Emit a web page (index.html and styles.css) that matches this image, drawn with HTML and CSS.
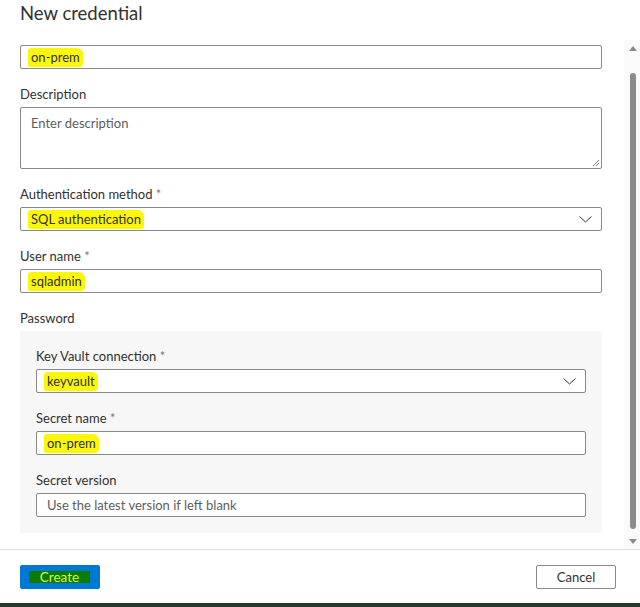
FILE: index.html
```html
<!DOCTYPE html>
<html lang="en">
<head>
<meta charset="utf-8">
<title>New credential</title>
<link rel="stylesheet" href="styles.css">
</head>
<body>
<div class="dialog">
  <header class="header">
    <h1 class="title">New credential</h1>
  </header>
  <div class="scroll">
    <div class="content">
      <div class="field">
        <div class="input"><span class="hl">on-prem</span></div>
      </div>
      <div class="field">
        <div class="label">Description</div>
        <div class="input textarea">
          <span class="placeholder">Enter description</span>
          <svg class="grip" width="8" height="8" viewBox="0 0 8 8"><path d="M7 1 L1 7 M7 4 L4 7" stroke="#777" stroke-width="1" fill="none"/></svg>
        </div>
      </div>
      <div class="field">
        <div class="label">Authentication method <span class="req">*</span></div>
        <div class="input select"><span class="hl">SQL authentication</span>
          <svg class="chev" width="13" height="7" viewBox="0 0 13 7"><path d="M0.5 0.5 L6.5 6 L12.5 0.5" stroke="#323130" stroke-width="1" fill="none"/></svg>
        </div>
      </div>
      <div class="field">
        <div class="label">User name <span class="req">*</span></div>
        <div class="input"><span class="hl">sqladmin</span></div>
      </div>
      <div class="field tight">
        <div class="label">Password</div>
        <div class="panel">
          <div class="field">
            <div class="label">Key Vault connection <span class="req">*</span></div>
            <div class="input select"><span class="hl">keyvault</span>
              <svg class="chev" width="13" height="7" viewBox="0 0 13 7"><path d="M0.5 0.5 L6.5 6 L12.5 0.5" stroke="#323130" stroke-width="1" fill="none"/></svg>
            </div>
          </div>
          <div class="field">
            <div class="label">Secret name <span class="req">*</span></div>
            <div class="input"><span class="hl">on-prem</span></div>
          </div>
          <div class="field last">
            <div class="label">Secret version</div>
            <div class="input"><span class="placeholder">Use the latest version if left blank</span></div>
          </div>
        </div>
      </div>
    </div>
    <div class="scrollbar">
      <div class="sb-btn"><span class="arrow up"></span></div>
      <div class="sb-track"><div class="thumb"></div></div>
      <div class="sb-btn"><span class="arrow down"></span></div>
    </div>
  </div>
  <footer class="footer">
    <button class="btn primary"><span class="hl-green">Create</span></button>
    <button class="btn">Cancel</button>
  </footer>
  <div class="bottom-bar"></div>
</div>
</body>
</html>
```

FILE: styles.css
```css
* { box-sizing: border-box; }
html, body { margin: 0; padding: 0; background: #fff; }
body {
  font-family: Lato, "Open Sans", sans-serif;
  color: #323130;
  font-size: 13px;
  width: 640px;
  height: 607px;
  overflow: hidden;
}
.dialog { display: flex; flex-direction: column; height: 607px; }
.header { height: 40px; padding-left: 20px; }
.title {
  margin: 0;
  font-size: 18.5px;
  font-weight: 400;
  line-height: 26px;
  color: #323130;
}
.scroll { display: flex; height: 509px; }
.content { flex: 1; padding: 5px 22px 0 20px; }
.field { margin-bottom: 15px; }
.field.tight { margin-bottom: 0; }
.field.last { margin-bottom: 0; }
.label {
  line-height: 20px;
  height: 20px;
  margin-bottom: 3px;
  font-size: 13px;
  color: #323130;
}
.req { color: #797775; }
.input {
  position: relative;
  height: 24px;
  border: 1px solid #8a8886;
  border-radius: 2px;
  background: #fff;
  padding: 0 10px;
  display: flex;
  align-items: center;
  font-size: 13px;
}
.textarea { height: 62px; align-items: flex-start; padding-top: 7px; }
.placeholder { color: #605e5c; }
.grip { position: absolute; right: 1px; bottom: 1px; }
.select { justify-content: space-between; padding-right: 9px; }
.chev { display: block; }
.hl {
  background: #fbf70a;
  padding: 1px 3px 2px;
  margin-left: -3px;
  border-radius: 3px 6px 4px 2px;
  line-height: 16px;
}
.panel {
  background: #f7f7f7;
  padding: 15px 16px 16px;
}
.scrollbar {
  width: 16px;
  background: #fafafa;
  display: flex;
  flex-direction: column;
  align-items: center;
}
.sb-btn { height: 16px; width: 16px; display: flex; align-items: center; justify-content: center; padding-left: 2px; }
.arrow { width: 0; height: 0; border-left: 4px solid transparent; border-right: 4px solid transparent; }
.arrow.up { border-bottom: 5px solid #8a8a8a; }
.arrow.down { border-top: 5px solid #8a8a8a; }
.sb-track { flex: 1; width: 16px; display: flex; justify-content: center; padding: 17px 0 4px 2px; }
.thumb { width: 6px; height: 100%; background: #8c8c8c; border-radius: 3px; }
.footer {
  border-top: 1px solid #e1dfdd;
  height: 54px;
  padding: 15px 24px 0 20px;
  display: flex;
  justify-content: space-between;
  align-items: flex-start;
}
.btn {
  width: 80px;
  height: 24px;
  border: 1px solid #8a8886;
  border-radius: 2px;
  background: #fff;
  color: #323130;
  font-family: Lato, "Open Sans", sans-serif;
  font-size: 13px;
  padding: 0;
  display: flex;
  align-items: center;
  justify-content: center;
}
.btn.primary { background: #0078d4; border-color: #0078d4; }
.hl-green {
  background: #0a7d00;
  color: #d8f53a;
  display: inline-block;
  width: 61px;
  height: 12px;
  line-height: 12px;
  text-align: center;
  margin-left: -1px;
  font-size: 13.5px;
}
.bottom-bar { flex: 1; background: #24382d; }
```
